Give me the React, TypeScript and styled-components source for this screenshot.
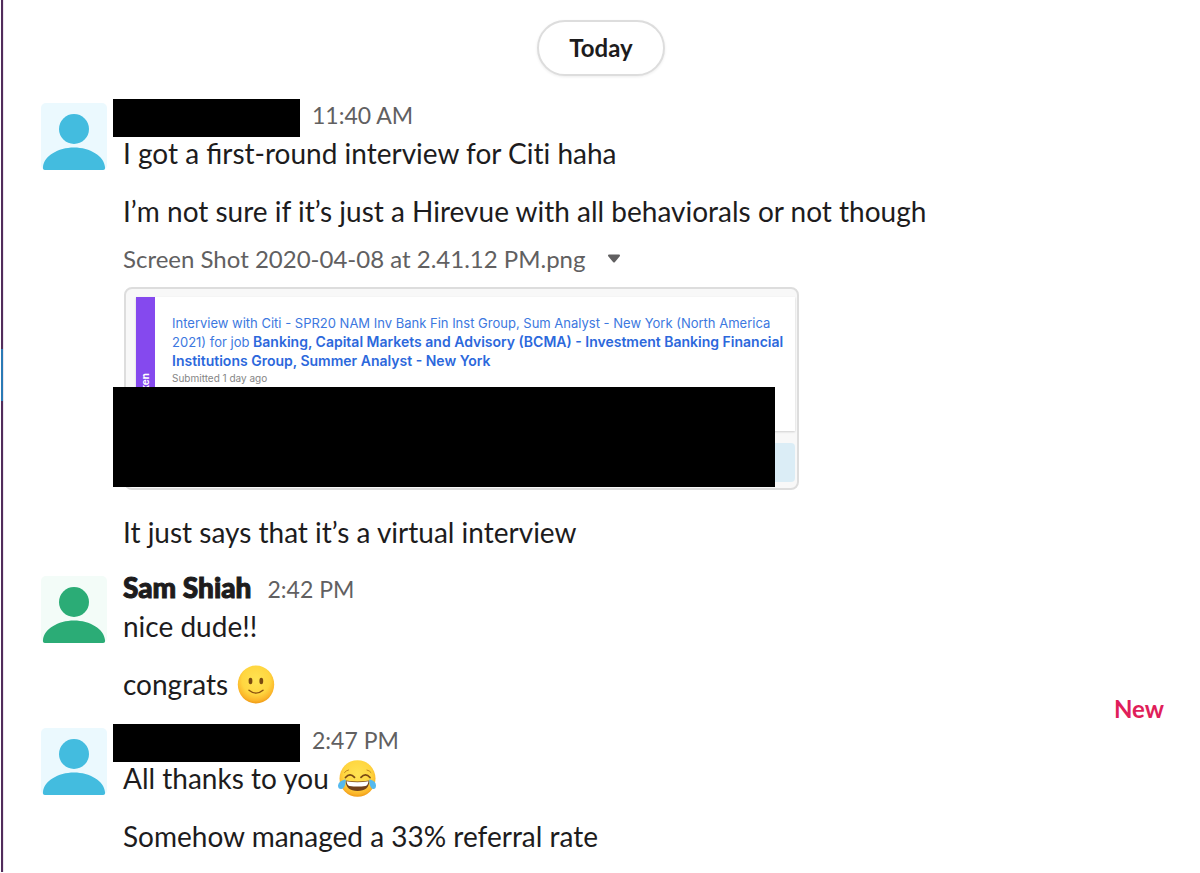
import React from 'react';
import styled, { createGlobalStyle } from 'styled-components';

const GlobalStyle = createGlobalStyle`
  *, *::before, *::after { box-sizing: border-box; }
  body {
    margin: 0;
    background: #fff;
    color: #1d1c1d;
    font-family: Lato, "Liberation Sans", sans-serif;
  }
  p, h2 { margin: 0; }
`;

const Page = styled.div`
  display: flex;
  min-height: 100vh;
  padding: 0 0 1px 1px;
`;

const Rail = styled.div`
  display: flex;
  flex-direction: column;
  width: 3px;
  flex: none;
  background: #522c5c;
  border-right: 1px solid #ece6ed;
`;

const RailMarker = styled.span`
  height: 52px;
  margin-top: 349px;
  background: #2a7ab5;
`;

const Channel = styled.main`
  flex: 1;
  min-width: 0;
  padding: 20px 36px 14px 37px;
`;

const DayDivider = styled.div`
  display: flex;
  justify-content: center;
  margin-bottom: 20px;
  padding-right: 3px;
`;

const DayButton = styled.button`
  height: 56px;
  padding: 0 30px;
  border: 2px solid #dddddd;
  border-radius: 28px;
  background: #fff;
  box-shadow: 0 1px 3px rgba(0, 0, 0, 0.08);
  color: #1d1c1d;
  font: 700 24px/28px Lato, sans-serif;
`;

const MessageRow = styled.article`
  position: relative;
  display: grid;
  grid-template-columns: 66px minmax(0, 1fr);
  column-gap: 16px;
  & + & { margin-top: 18px; }
`;

const Avatar = styled.svg`
  display: block;
  width: 66px;
  height: 67px;
  margin-top: 7px;
`;

const Header = styled.header`
  display: flex;
  align-items: baseline;
  height: 38px;
  line-height: 38px;
`;

const Author = styled.h2`
  margin-right: 16px;
  font-family: "Lato Black", Lato, sans-serif;
  font-size: 28px;
  font-weight: 900;
  line-height: 36px;
  -webkit-text-stroke: 1px currentColor;
`;

const HiddenAuthor = styled.span`
  align-self: flex-start;
  flex: none;
  width: 187px;
  height: 38px;
  margin: 3px 12px 0 -10px;
  background: #000;
`;

const Time = styled.time`
  color: #616061;
  font-size: 23px;
`;

const Text = styled.p`
  font-size: 28px;
  line-height: 38px;
  & + & { margin-top: 20px; }
`;

const PlainLetters = styled.span`
  font-variant-ligatures: none;
`;

const FileToggle = styled.button`
  display: flex;
  align-items: center;
  gap: 21px;
  margin: 8px 0;
  padding: 0;
  border: 0;
  background: none;
  color: #616061;
  font: 400 24px/41px Lato, sans-serif;
`;

const Attachment = styled.figure`
  position: relative;
  width: 675px;
  max-width: 100%;
  height: 203px;
  margin: 0 0 23px 1px;
  padding: 8px 2px 7px 10px;
  border: 2px solid #dddddd;
  border-radius: 8px;
  background: #f8f8f8;
`;

const Preview = styled.div`
  display: flex;
  height: 134px;
  background: #fff;
  box-shadow: 0 1px 2px rgba(0, 0, 0, 0.16);
`;

const Stage = styled.div`
  width: 19px;
  flex: none;
  padding-top: 76px;
  background: #8549ee;
  color: #fff;
  font: 700 10px/19px Inter, sans-serif;
  span {
    display: block;
    writing-mode: vertical-rl;
    transform: rotate(180deg);
  }
`;

const Details = styled.div`
  padding: 17px 0 0 17px;
  font-family: Inter, "Liberation Sans", sans-serif;
`;

const JobLink = styled.a`
  display: block;
  color: #3c78e0;
  font-size: 13px;
  line-height: 19px;
  text-decoration: none;
  white-space: nowrap;
`;

const JobTitle = styled.strong`
  color: #2c68dc;
  font-size: 14px;
  font-weight: 600;
  line-height: 18px;
`;

const Submitted = styled.p`
  color: #858585;
  font-size: 10px;
  line-height: 14px;
`;

const Notice = styled.div`
  height: 39px;
  margin-top: 12px;
  border-radius: 4px;
  background: #dbedf6;
`;

const Redaction = styled.div`
  position: absolute;
  left: -13px;
  top: 98px;
  width: 662px;
  height: 100px;
  background: #000;
`;

const Emoji = styled.svg`
  width: 40px;
  height: 40px;
  margin-bottom: -2px;
  vertical-align: top;
`;

const NewLabel = styled.span`
  position: absolute;
  right: 0;
  top: -27px;
  color: #e01e5a;
  font-size: 24px;
  font-weight: 700;
  line-height: 30px;
`;

function Person({ color, tint }: { color: string; tint: string }) {
  return (
    <Avatar viewBox="0 0 66 67" aria-hidden="true">
      <rect width="66" height="67" rx="5" fill={tint} />
      <circle cx="33" cy="26" r="15" fill={color} />
      <path d="M2 64C3 53 17 44.500 33 44.500S63 53 64 64Q64.500 67 62 67H4Q1.500 67 2 64Z" fill={color} />
    </Avatar>
  );
}

function FaceFill({ id }: { id: string }) {
  return (
    <defs>
      <radialGradient id={id} cx="0.5" cy="0.38" r="0.64">
        <stop offset="0" stopColor="#ffe352" />
        <stop offset="0.6" stopColor="#ffd640" />
        <stop offset="0.85" stopColor="#fbb52a" />
        <stop offset="1" stopColor="#ec930f" />
      </radialGradient>
    </defs>
  );
}

function Smile() {
  return (
    <Emoji viewBox="0 0 40 40" role="img" aria-label="slightly smiling face">
      <FaceFill id="smile-face" />
      <ellipse cx="21" cy="19.5" rx="18.2" ry="19" fill="url(#smile-face)" />
      <ellipse cx="15.5" cy="16" rx="1.9" ry="3.2" fill="#7a4a10" />
      <ellipse cx="26.3" cy="16" rx="1.9" ry="3.2" fill="#7a4a10" />
      <path d="M14 25.2Q21 31 28 25.2" fill="none" stroke="#8a5210" strokeWidth="1.4" strokeLinecap="round" />
    </Emoji>
  );
}

function Joy() {
  return (
    <Emoji viewBox="-1 1 40 40" role="img" aria-label="face with tears of joy">
      <FaceFill id="joy-face" />
      <ellipse cx="20.5" cy="20.5" rx="18" ry="18.3" fill="url(#joy-face)" />
      <g transform="translate(-1 0)">
        <g fill="none" stroke="#7c4b14" strokeLinecap="round">
          <path d="M9.5 19.5Q14 14.5 18.5 19.3M25 19.3Q29.5 14.5 34 19.5" strokeWidth="1.8" />
          <path d="M8.5 14.5Q10 12.5 12.5 12M31 12Q33.5 12.5 35 14.5" strokeWidth="0.9" stroke="#b87a1c" />
        </g>
        <path d="M9.5 22.5Q21.5 24.5 33.5 22.5Q33 33 21.5 33T9.5 22.5Z" fill="#70401a" />
        <path d="M10.5 23.3Q21.5 25 32.5 23.3Q32 27.5 29.5 28Q21.5 29 13.5 28Q11 27.5 10.5 23.3Z" fill="#fff" />
        <path d="M9 21.5Q2.500 23 2 27.500Q2 31.300 5.500 31Q9.500 30.200 9.800 22Q9.800 21.300 9 21.500Z" fill="#55b9ee" />
        <path d="M34 21.5Q40 23 40 27.500Q40 31.300 37 31Q33.500 30.200 33.200 22Q33.200 21.300 34 21.500Z" fill="#55b9ee" />
      </g>
    </Emoji>
  );
}

export default function App() {
  return (
    <>
      <GlobalStyle />
      <Page>
        <Rail><RailMarker /></Rail>
        <Channel>
          <DayDivider><DayButton type="button">Today</DayButton></DayDivider>

          <MessageRow>
            <Person color="#43bcdf" tint="#ebf9fe" />
            <div>
              <Header><HiddenAuthor /><Time>11:40 AM</Time></Header>
              <Text>I got a first-round interview for <PlainLetters>Citi</PlainLetters> haha</Text>
              <Text>I’m not sure if it’s just a Hirevue with all behaviorals or not though</Text>
              <FileToggle type="button">
                Screen Shot 2020-04-08 at 2.41.12 PM.png
                <svg width="14" height="9" viewBox="0 0 14 9" aria-hidden="true">
                  <path d="M2 1.500H12L7 7.500Z" fill="#616061" stroke="#616061" strokeWidth="2" strokeLinejoin="round" />
                </svg>
              </FileToggle>
              <Attachment>
                <Preview>
                  <Stage><span>ken</span></Stage>
                  <Details>
                    <JobLink href="#interview">
                      Interview with Citi - SPR20 NAM Inv Bank Fin Inst Group, Sum Analyst - New York (North America<br />
                      2021) for job <JobTitle>Banking, Capital Markets and Advisory (BCMA) - Investment Banking Financial<br />
                      Institutions Group, Summer Analyst - New York</JobTitle>
                    </JobLink>
                    <Submitted>Submitted 1 day ago</Submitted>
                  </Details>
                </Preview>
                <Notice />
                <Redaction />
              </Attachment>
              <Text>It just says that it’s a virtual interview</Text>
            </div>
          </MessageRow>

          <MessageRow>
            <Person color="#2bac76" tint="#f3fcf8" />
            <div>
              <Header><Author>Sam Shiah</Author><Time>2:42 PM</Time></Header>
              <Text>nice dude!!</Text>
              <Text>congrats <Smile /></Text>
            </div>
          </MessageRow>

          <MessageRow>
            <NewLabel>New</NewLabel>
            <Person color="#43bcdf" tint="#ebf9fe" />
            <div>
              <Header><HiddenAuthor /><Time>2:47 PM</Time></Header>
              <Text>All thanks to you <Joy /></Text>
              <Text>Somehow managed a 33% referral rate</Text>
            </div>
          </MessageRow>
        </Channel>
      </Page>
    </>
  );
}
